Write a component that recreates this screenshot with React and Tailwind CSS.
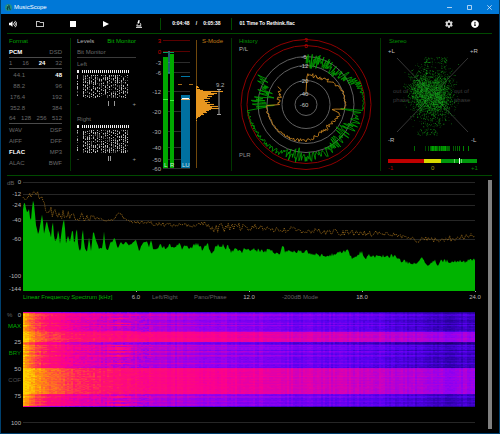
import React, { useEffect, useRef, useState } from "react";
import { FaVolumeUp, FaRegFolder, FaCog, FaInfoCircle } from "react-icons/fa";

// Small seeded generator so the traces are the same on every load
function makeRandom(seed) {
  let s = seed;
  return () => {
    s = (s * 1664525 + 1013904223) % 4294967296;
    return s / 4294967296;
  };
}

// Linear interpolation through a list of [position, value, ...values]
function sample(keys, pos, index = 1) {
  if (pos <= keys[0][0]) return keys[0][index];
  for (let i = 1; i < keys.length; i++) {
    if (pos <= keys[i][0]) {
      const a = keys[i - 1];
      const b = keys[i];
      return a[index] + ((b[index] - a[index]) * (pos - a[0])) / (b[0] - a[0] || 1);
    }
  }
  return keys[keys.length - 1][index];
}

const FORMAT_ROWS = [
  { items: ["PCM", "DSD"], active: "PCM", line: true },
  { items: ["1", "16", "24", "32"], active: "24", line: true },
  { items: ["44.1", "48"], active: "48", indent: true },
  { items: ["88.2", "96"], indent: true },
  { items: ["176.4", "192"], indent: true },
  { items: ["352.8", "384"], indent: true },
  { items: ["64", "128", "256", "512"], line: true },
  { items: ["WAV", "DSF"] },
  { items: ["AIFF", "DFF"] },
  { items: ["FLAC", "MP3"], active: "FLAC" },
  { items: ["ALAC", "BWF"] },
];

function TitleBar() {
  return (
    <header className="flex h-[14px] items-center justify-between bg-[#0078d7] pr-[7px] pl-1 text-white">
      <div className="flex items-center gap-[2px]">
        <svg viewBox="0 0 8 8" className="h-[7px] w-[7px]">
          <circle cx="4" cy="4" r="4" fill="#1f8f86" />
          <path d="M3 7V4l1-3 1 2v1l1 3M2 5l2-1" stroke="#0b2f33" fill="none" />
          <path d="M3 2l1-1" stroke="#bfe8d0" strokeWidth="0.8" />
        </svg>
        <h1 className="text-[6px]">MusicScope</h1>
      </div>
      <div className="flex items-center gap-[15px]">
        <button type="button" aria-label="Minimize">
          <svg viewBox="0 0 5 5" className="block h-[5px] w-[5px]">
            <path d="M0 2.5h5" stroke="#d5e8fa" strokeWidth="0.8" />
          </svg>
        </button>
        <button type="button" aria-label="Maximize">
          <svg viewBox="0 0 5 5" className="block h-[5px] w-[5px]">
            <path d="M.5.5h4v4h-4z" stroke="#d5e8fa" strokeWidth="0.8" fill="none" />
          </svg>
        </button>
        <button type="button" aria-label="Close">
          <svg viewBox="0 0 5 5" className="block h-[5px] w-[5px]">
            <path d="M.3.3l4.4 4.4M4.7.3L.3 4.7" stroke="#d5e8fa" strokeWidth="0.8" />
          </svg>
        </button>
      </div>
    </header>
  );
}

function Toolbar() {
  return (
    <div className="mr-[7px] ml-[6px] grid h-5 grid-cols-[153fr_72fr_259fr] items-center border-b border-[#004a00] text-white">
      <div className="flex items-center gap-[25px] pl-[2px]">
        <button type="button" aria-label="Volume" className="-mr-[6px]">
          <FaVolumeUp className="h-2 w-2" />
        </button>
        <button type="button" aria-label="Open folder">
          <FaRegFolder className="h-2 w-2" />
        </button>
        <button type="button" aria-label="Stop">
          <svg viewBox="0 0 8 8" className="block h-2 w-2">
            <path d="M1 1h6v6H1z" fill="white" />
          </svg>
        </button>
        <button type="button" aria-label="Play">
          <svg viewBox="0 0 8 8" className="block h-2 w-2">
            <path d="M1 1l6 3-6 3z" fill="white" />
          </svg>
        </button>
        <button type="button" aria-label="Analyze">
          <svg viewBox="0 0 8 8" className="block h-2 w-2" fill="none" stroke="white">
            <path d="M4.200 .2L3 3.400" strokeWidth="1.5" />
            <path d="M4.600 2.600Q6.200 3.600 5.800 5.600M2.300 4.200L1.600 5.800" strokeWidth="0.8" />
            <path d="M1 7.300h6M2 5.900h4" strokeWidth="1" />
          </svg>
        </button>
      </div>
      <div className="flex h-3 items-center justify-between border-x border-[#004a00] px-[11px] text-[5px] font-bold">
        <span>0:04:48</span>
        <span>/</span>
        <span>0:05:38</span>
      </div>
      <div className="flex items-center pl-[7px]">
        <span className="flex-1 text-[5px] font-bold">01 Time To Rethink.flac</span>
        <div className="flex gap-[18px] pr-[13px]">
          <button type="button" aria-label="Settings">
            <FaCog className="h-2 w-2 text-[#d8d8d8]" />
          </button>
          <button type="button" aria-label="Info">
            <FaInfoCircle className="h-2 w-2" />
          </button>
        </div>
      </div>
    </div>
  );
}

function FormatPanel() {
  return (
    <section className="min-w-0 pr-2 pl-[2px] text-[6px] leading-[6px]">
      <h2 className="h-[9px] text-[#00a000]">Format</h2>
      {FORMAT_ROWS.map((row) => (
        <div
          key={row.items.join()}
          className={`flex h-[11px] items-center justify-between ${row.line ? "border-b border-[#4a4a4a]" : ""}`}
        >
          {row.items.map((item, i) => (
            <span
              key={item}
              className={`${row.active === item ? "font-bold text-white" : "text-[#6a6a6a]"} ${
                row.indent && i === 0 ? "w-4 text-right" : ""
              }`}
            >
              {item}
            </span>
          ))}
        </div>
      ))}
    </section>
  );
}

function BitMatrix({ seed, marks }) {
  const random = makeRandom(seed);
  let top = "M0 0h2v3h-2zM5 0h1v3h-1z";
  let bright = "";
  let dim = "";
  for (let x = 7; x < 52; x += 2) {
    top += `M${x} 0h1v3h-1z`;
  }
  for (let x = 0; x < 52; x += 2) {
    if (x === 2) continue;
    for (let y = 5; y < 28; y += 1) {
      const r = random();
      if (x === 4 && r < 0.8) continue;
      if (r < 0.36) bright += `M${x} ${y}h1v1h-1z`;
      else if (r < 0.62) dim += `M${x} ${y}h1v1h-1z`;
    }
  }
  return (
    <div>
      <svg viewBox="0 0 53 28" className="mt-px block h-[28px] w-[53px]" shapeRendering="crispEdges">
        <path d={top} fill="#f0f0f0" />
        <path d={bright} fill="#b8b8b8" />
        <path d={dim} fill="#555" />
      </svg>
      <div className="flex h-[11px] items-center justify-between text-[#999]">
        <span>-</span>
        <svg viewBox="0 0 12 5" className="ml-3 h-[5px] w-3">
          {marks.map((m) => (
            <path key={m} d={`M${m}.5 0v5`} stroke="#999" />
          ))}
        </svg>
        <span>+</span>
      </div>
    </div>
  );
}

function LevelsPanel() {
  const [tab, setTab] = useState("Bit Monitor");
  return (
    <section className="min-w-0 border-l border-[#003800] pr-3 pl-[6px] text-[6px] leading-[6px]">
      <div className="flex h-[9px] items-start justify-between whitespace-nowrap">
        {["Levels", "Bit Monitor"].map((name) => (
          <button
            key={name}
            type="button"
            onClick={() => setTab(name)}
            className={tab === name ? "text-[#00b400]" : "text-[#b0b0b0]"}
          >
            {name}
          </button>
        ))}
      </div>
      <h3 className="flex h-[11px] items-center border-b border-[#3a3a3a] text-[#6a6a6a]">Bit Monitor</h3>
      <div className="h-[55px] text-[#6a6a6a]">
        <h4 className="flex h-[11px] items-center">Left</h4>
        <BitMatrix seed={11} marks={[2, 8]} />
      </div>
      <div className="text-[#6a6a6a]">
        <h4 className="flex h-[11px] items-center">Right</h4>
        <BitMatrix seed={47} marks={[2, 4]} />
      </div>
    </section>
  );
}

const METER_SCALE = [
  ["3", 2],
  ["0", 13],
  ["-3", 24],
  ["-6", 34],
  ["-12", 53],
  ["-20", 73],
  ["-30", 93],
  ["-40", 109],
  ["-50", 121],
  ["-60", 130],
];

const LOUDNESS = [
  2, 3, 1, 4, 7, 27, 15, 21, 18, 12, 16, 11, 14, 8, 12, 9, 14, 11, 18, 14, 22, 16, 23, 15, 13, 10, 11, 7, 8, 5, 4, 2, 1, 0, 1,
];

function MeterPanel() {
  return (
    <section className="relative min-w-0">
      <svg viewBox="0 0 83 133" className="block w-full overflow-visible text-[6px]">
        {METER_SCALE.map(([label, y], i) => (
          <g key={label}>
            <path d={`M15 ${y}.5h27`} stroke={i < 2 ? "#5a0000" : "#2c2c2c"} />
            <text x="13" y={y + 3} textAnchor="end" fill={i < 2 ? "#d00000" : "#b0b0b0"}>
              {label}
            </text>
          </g>
        ))}
        <path d="M15 19h5v111h-5zM22 16h4v114h-4z" fill="#00a800" />
        <path d="M15 14.500h5M22 14.500h4" stroke="#00a060" />
        <path d="M15 61.500h5M22 62.500h4" stroke="#3cf03c" />
        <path d="M21 13v23" stroke="#40b8d8" />
        <path d="M33 57h9v73h-9z" fill="#0070a0" />
        <path d="M33 38.500h9" stroke="#0078a8" />
        <path d="M30 46.500h4M41 46.500h4" stroke="#a86c18" />
        <path d="M34 60.500h7" stroke="#fff" />
        <path d="M33 61.500h9" stroke="#d8b070" />
        <text x="16" y="129" fill="#d0e8d0">L</text>
        <text x="22" y="129" fill="#d0e8d0">R</text>
        <text x="34" y="129" fill="#d0e8f0">LU</text>
        <path d="M48.500 2v128" stroke="#70480c" />
        {LOUDNESS.map((w, i) => (
          <path key={i} d={`M48 ${48 + i}.5h${w}`} stroke="#e89820" strokeWidth="1.1" />
        ))}
        <path d="M69 51.500h4M71 51v26M69 76.500h4" stroke="#a0a0a0" fill="none" />
        <text x="68" y="49" fill="#b0b0b0">9.2</text>
      </svg>
      <button type="button" className="absolute top-0 right-2 text-[6px] leading-[6px] text-[#c07c18]">
        S-Mode
      </button>
    </section>
  );
}

// [angle clockwise from the top, radius, noise]
const PEAK_TRACE = [
  [0, 45, 7],
  [8, 44, 9],
  [20, 44, 7],
  [45, 45, 7],
  [60, 50, 6],
  [70, 56, 4],
  [82, 58, 1],
  [96, 57, 1],
  [97, 30, 1],
  [98, 52, 4],
  [110, 52, 6],
  [125, 46, 9],
  [140, 48, 7],
  [160, 52, 5],
  [180, 52, 6],
  [192, 51, 8],
  [210, 55, 3],
  [230, 56, 2],
  [264, 58, 1],
  [266, 40, 2],
  [268, 44, 13],
  [290, 43, 10],
  [304, 53, 6],
];

const LOUDNESS_TRACE = [
  [0, 12, 0],
  [1, 27, 0],
  [5, 31, 2],
  [20, 29, 2],
  [45, 33, 2],
  [70, 39, 1],
  [97, 39, 1],
  [100, 25, 0],
  [105, 35, 1],
  [130, 31, 2],
  [150, 32, 2],
  [180, 36, 2],
  [225, 38, 1],
  [255, 39, 1],
  [268, 41, 1],
  [270, 27, 1],
  [290, 28, 3],
  [304, 32, 2],
];

function polarPath(keys, step, seed) {
  const random = makeRandom(seed);
  let d = "";
  for (let angle = 0; angle <= 304; angle += step) {
    const r = Math.min(59, sample(keys, angle) + (random() * 2 - 1) * sample(keys, angle, 2));
    const a = (angle * Math.PI) / 180;
    d += `${d ? "L" : "M"}${(74 + Math.sin(a) * r).toFixed(1)} ${(66.5 - Math.cos(a) * r).toFixed(1)}`;
  }
  return d;
}

function HistoryPanel() {
  const rings = [
    ["3", 65, "#900000"],
    ["0", 59, "#900000"],
    ["-6", 48, "#606060"],
    ["-12", 39, "#606060"],
    ["-20", 24, "#606060"],
    ["-40", 11, "#606060"],
  ];
  return (
    <section className="min-w-0 border-l border-[#003800]">
      <svg viewBox="0 0 148 133" className="block w-full overflow-visible text-[6px]">
        <text x="7" y="5" fill="#009000">History</text>
        <text x="7" y="13" fill="#b0b0b0">P/L</text>
        <text x="7" y="119" fill="#909090">PLR</text>
        {rings.map(([label, r, color]) => (
          <circle key={label} cx="74" cy="66.5" r={r} fill="none" stroke={color} strokeWidth="1" />
        ))}
        <path d={polarPath(PEAK_TRACE, 0.8, 5)} fill="none" stroke="#00a800" strokeWidth="0.8" />
        <path d={polarPath(LOUDNESS_TRACE, 1.8, 9)} fill="none" stroke="#c88420" strokeWidth="0.9" />
        {rings.map(([label, r], i) => (
          <text key={label} x={i < 2 ? 74 : 72} y={68.5 - r} textAnchor="middle" fill={i < 2 ? "#d00000" : "#c8c8c8"}>
            {label}
          </text>
        ))}
        <text x="72" y="69" textAnchor="middle" fill="#c8c8c8">-60</text>
      </svg>
    </section>
  );
}

function stereoDots() {
  const random = makeRandom(23);
  const gauss = () => random() + random() + random() - 1.5;
  const layers = ["", "", ""];
  const dot = (x, y, layer) => {
    layers[layer] += `M${x.toFixed(1)} ${y.toFixed(1)}h.7v.7h-.7z`;
  };
  for (let i = 0; i < 2300; i++) {
    dot(50 + gauss() * 21, 56 + gauss() * 23, i % 3);
  }
  for (let i = 0; i < 260; i++) {
    dot(39 + gauss() * 9, 50 + gauss() * 13, i % 3);
    dot(59 + gauss() * 10, 62 + gauss() * 14, i % 3);
  }
  // loose arcs above and below the cloud
  for (let i = 0; i < 55; i++) {
    dot(43 + random() * 23, 19 + random() * 6, i % 3);
    dot(43 + random() * 5 + (i % 2) * 17, 20 + random() * 16, i % 3);
    dot(36 + random() * 20, 91 + random() * 6, i % 3);
    dot(42 + random() * 18, 80 + random() * 10, i % 3);
  }
  return layers;
}

function StereoPanel() {
  const dots = stereoDots();
  const random = makeRandom(3);
  const bars = [];
  for (let x = 49; x < 69; x++) bars.push([x, 0.4 + random() * 0.6]);
  [33, 44, 47, 72, 74, 76, 78, 82, 87].forEach((x) => bars.push([x, 0.3 + random() * 0.5]));
  return (
    <section className="min-w-0 border-l border-[#003800]">
      <svg viewBox="0 0 111 133" className="block w-full overflow-visible text-[6px]">
        <text x="8" y="5" fill="#009000">Stereo</text>
        <path d="M16 20l71 74M87 20L16 94" stroke="#363636" />
        <g fill="#3c3c3c">
          <text x="12" y="55">out of</text>
          <text x="12" y="64">phase</text>
          <text x="73" y="55">out of</text>
          <text x="73" y="64">phase</text>
        </g>
        <path d={dots[0]} fill="#0a4a0a" />
        <path d={dots[1]} fill="#0c720c" />
        <path d={dots[2]} fill="#12a01a" />
        <g fill="#c0c0c0">
          <text x="7" y="15">+L</text>
          <text x="89" y="15">+R</text>
          <text x="7" y="104">-R</text>
          <text x="90" y="104">-L</text>
        </g>
        {bars.map(([x, o]) => (
          <path key={x} d={`M${x}.5 108v5`} stroke="#00b000" strokeOpacity={o} />
        ))}
        <path d="M7 121h36v4h-36z" fill="#c00000" />
        <path d="M43 121h17v4h-17z" fill="#d8d800" />
        <path d="M60 121h36v4h-36z" fill="#00980c" />
        <path d="M73.500 121v4M80.500 121v4" stroke="#90e890" strokeOpacity="0.7" />
        <path d="M78.500 120v6" stroke="#fff" />
        <text x="7" y="132" fill="#b00000">-1</text>
        <text x="50" y="132" fill="#b0a000">0</text>
        <text x="90" y="132" fill="#008800">+1</text>
      </svg>
    </section>
  );
}

// Spectrum keys are kept on a grid three times finer than the plot
const SPECTRUM = [
  [68, 120], [73, 85], [78, 110], [83, 125], [86, 100], [92, 155], [98, 85], [103, 100], [108, 160], [115, 190],
  [122, 150], [127, 122], [132, 185], [140, 145], [147, 175], [153, 195], [158, 140], [163, 205], [170, 205],
  [175, 170], [180, 215], [187, 160], [193, 140], [198, 215], [203, 190], [210, 210], [218, 165], [223, 225],
  [230, 160], [235, 225], [242, 240], [248, 165], [254, 230], [262, 240], [267, 195], [273, 238], [280, 172],
  [286, 200], [297, 230], [307, 228], [312, 180], [317, 230], [325, 235], [331, 208], [337, 212], [344, 196],
  [353, 232], [362, 208], [370, 220], [377, 207], [385, 220], [395, 215], [408, 203], [417, 238], [428, 212],
  [440, 208], [447, 225], [452, 206], [460, 232], [480, 220], [500, 230], [508, 218], [520, 230], [537, 215],
  [547, 230], [553, 213], [568, 230], [580, 222], [594, 213], [607, 235], [622, 215], [635, 245], [648, 222],
  [668, 220], [676, 232], [682, 220], [694, 242], [705, 226], [724, 242], [735, 230], [780, 236], [815, 236],
  [838, 248], [848, 218], [856, 240], [925, 240], [935, 248], [990, 250], [1042, 235], [1056, 260], [1070, 248],
  [1085, 240], [1094, 265], [1105, 252], [1190, 252], [1200, 264], [1245, 276], [1264, 256], [1278, 280],
  [1304, 266], [1315, 284], [1322, 266], [1370, 270], [1426, 265],
];

const MAXIMUM = [
  [68, 75, 24], [80, 64, 16], [100, 70, 14], [128, 74, 14], [140, 110, 16], [170, 126, 16], [200, 128, 16],
  [250, 134, 14], [300, 142, 4], [340, 145, 4], [355, 120, 4], [380, 145, 6], [440, 154, 7], [520, 160, 7],
  [600, 158, 9], [640, 165, 16], [750, 166, 12], [850, 172, 9], [1000, 180, 9], [1080, 183, 9], [1180, 188, 7],
  [1240, 205, 9], [1350, 200, 9], [1426, 192, 9],
];

function SpectrumPlot() {
  const random = makeRandom(71);
  let area = "M16 115";
  for (let x = 69; x <= 1425; x += 3) {
    const jitter = x > 450 ? (random() - 0.5) * 12 : (random() - 0.5) * 4;
    area += `L${Math.round(x / 3) - 7} ${((sample(SPECTRUM, x) + jitter) / 3 - 4).toFixed(1)}`;
  }
  area += "V115z";
  let peaks = "";
  for (let x = 69; x <= 1425; x += 4) {
    const y = sample(MAXIMUM, x) + (random() - 0.5) * 2 * sample(MAXIMUM, x, 2);
    peaks += `${peaks ? "L" : "M"}${(x / 3 - 7).toFixed(1)} ${(y / 3 - 4).toFixed(1)}`;
  }
  const scale = [
    ["0", 6],
    ["-12", 18],
    ["-24", 29],
    ["-40", 44],
    ["-60", 63],
    ["-100", 100],
    ["-144", 113],
  ];
  return (
    <svg viewBox="0 0 474 116" className="block w-full overflow-visible text-[6px]">
      <text x="0" y="9" fill="#606060">dB</text>
      {scale.map(([label, y]) => (
        <g key={label}>
          <path d={`M16 ${y}.5h452`} stroke="#262626" />
          <text x="14" y={y + 2} textAnchor="end" fill="#b8b8b8">{label}</text>
        </g>
      ))}
      <path d={peaks} fill="none" stroke="#a4721c" strokeWidth="0.9" strokeDasharray="1 1" />
      <path d={area} fill="#00b400" />
      <path d="M129.500 115v1M242.500 115v1M355.500 115v1M468.500 115v1" stroke="#aaa" />
    </svg>
  );
}

function SpectrumAxis() {
  const tick = "-mr-[6px] w-3 text-center text-[#b8b8b8]";
  return (
    <div className="mr-[6px] ml-4 grid h-[10px] grid-cols-4 items-center text-[6px] leading-[6px] whitespace-nowrap text-[#606060]">
      <div className="flex justify-between">
        <button type="button" className="text-[#00b400]">Linear Frequency Spectrum [kHz]</button>
        <span className={tick}>6.0</span>
      </div>
      <div className="flex justify-between pl-4">
        <button type="button">Left/Right</button>
        <button type="button">Pano/Phase</button>
        <span className={tick}>12.0</span>
      </div>
      <div className="flex justify-between pl-[33px]">
        <button type="button">-200dB Mode</button>
        <span className={tick}>18.0</span>
      </div>
      <div className="flex justify-end">
        <span className={tick}>24.0</span>
      </div>
    </div>
  );
}

const HEAT = [
  [0, 16, 0, 80],
  [0.12, 44, 0, 168],
  [0.24, 88, 0, 240],
  [0.36, 148, 0, 240],
  [0.46, 205, 0, 190],
  [0.56, 250, 0, 145],
  [0.68, 255, 20, 105],
  [0.8, 255, 90, 50],
  [0.9, 255, 150, 10],
  [1, 255, 215, 0],
];

const LOUD = [[0, 0.66], [0.15, 0.63], [0.4, 0.57], [0.6, 0.5], [0.8, 0.44], [0.93, 0.38], [1, 0.39]];
const QUIET = [[0, 0.6], [0.12, 0.52], [0.25, 0.44], [0.45, 0.37], [0.6, 0.31], [0.8, 0.25], [0.92, 0.17], [1, 0.19]];

function Spectrogram() {
  const canvasRef = useRef(null);

  useEffect(() => {
    const ctx = canvasRef.current.getContext("2d");
    const random = makeRandom(99);
    const columns = Array.from({ length: 226 }, () => (random() - 0.5) * 0.05);
    for (let y = 0; y < 95; y++) {
      const chorus = y >= 56 && y < 82;
      const loud = chorus || (y >= 20 && y < 30);
      const dark = (y >= 30 && y < 33) || y === 83 || y === 10 || y === 53;
      const row = (random() - 0.5) * (loud ? 0.04 : 0.1) - (dark ? 0.06 : 0);
      for (let i = 0; i < 226; i++) {
        const x = i * 2;
        let v = sample(loud ? LOUD : QUIET, x / 452) + row + columns[i];
        v += 0.36 * Math.exp(-x / (chorus ? 38 : 20));
        v += (random() - 0.5) * (x < 130 ? 0.08 : 0.03);
        // held vocal notes show up as short streaks
        if (!loud && y > 5 && row > 0) v += 0.13 * Math.exp(-(((x - 96) / 9) ** 2));
        v = Math.max(0, Math.min(1, v));
        if (y === 0 || y === 94) v *= 0.6;
        const [r, g, b] = [1, 2, 3].map((c) => Math.round(sample(HEAT, v, c)));
        ctx.fillStyle = `rgb(${r},${g},${b})`;
        ctx.fillRect(x, y, 2, 1);
      }
    }
  }, []);

  return (
    <canvas
      ref={canvasRef}
      width={452}
      height={95}
      aria-label="Spectrogram"
      className="mt-1 block h-[95px] w-full"
    />
  );
}

function Waterfall() {
  const [mode, setMode] = useState("MAX");
  const rows = [
    ["0", "MAX"],
    ["25", "BRY"],
    ["50", "COF"],
    ["75", null],
    ["100", null],
  ];
  return (
    <section className="mt-[6px] flex text-[6px] leading-[6px]">
      <div className="w-4 shrink-0 pr-[2px] text-right">
        {rows.map(([value, name]) => (
          <div key={value} className={value === "100" ? "h-3" : "h-[27px]"}>
            <div className="flex h-[13px] items-center justify-end text-[#b8b8b8]">
              {value === "0" && <span className="flex-1 text-left text-[#606060]">%</span>}
              {value}
            </div>
            {name && (
              <button
                type="button"
                onClick={() => setMode(name)}
                className={`flex h-[10px] w-full items-center justify-end ${
                  name === "COF" ? "text-[#505050]" : mode === name ? "text-[#00b400]" : "text-[#009800]"
                }`}
              >
                {name}
              </button>
            )}
          </div>
        ))}
      </div>
      <div className="mr-[6px] flex-1">
        <Spectrogram />
        <div className="h-4 border-b border-[#262626]" />
      </div>
    </section>
  );
}

export default function App() {
  return (
    <div className="flex min-h-screen flex-col border-x border-b border-[#00406e] bg-black font-['Liberation_Sans',sans-serif]">
      <TitleBar />
      <Toolbar />
      <div className="mr-[7px] ml-[6px] grid grid-cols-[63fr_78fr_83fr_149fr_112fr] border-b border-[#004a00] pt-1 pb-1">
        <FormatPanel />
        <LevelsPanel />
        <MeterPanel />
        <HistoryPanel />
        <StereoPanel />
      </div>
      <main className="mr-[7px] ml-[6px] flex flex-1">
        <div className="min-w-0 flex-1">
          <SpectrumPlot />
          <SpectrumAxis />
          <Waterfall />
        </div>
        <div className="mt-1 mb-1 ml-[7px] w-1 bg-[#808080]" />
      </main>
    </div>
  );
}
